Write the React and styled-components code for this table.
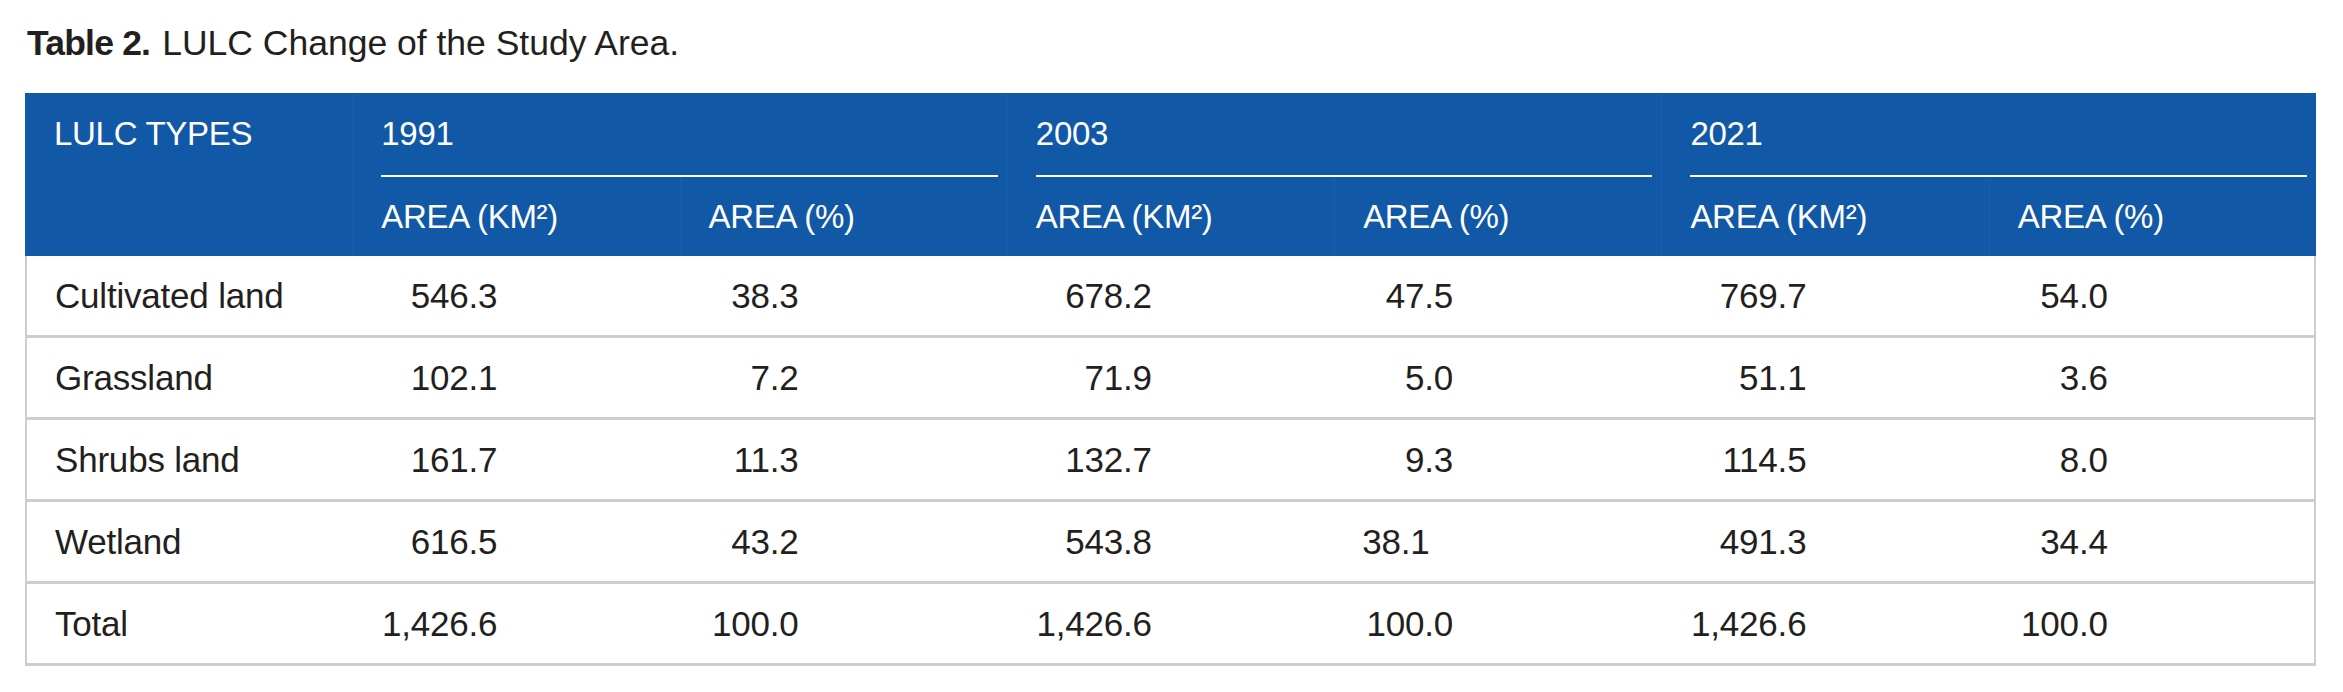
import React from "react"
import styled, { createGlobalStyle } from "styled-components"

const BLUE = "#1158a6"
const RULE = "#cdcdcd"
const INK = "#231f20"

const rows = [
  ["Cultivated land", "546.3", "38.3", "678.2", "47.5", "769.7", "54.0"],
  ["Grassland", "102.1", "7.2", "71.9", "5.0", "51.1", "3.6"],
  ["Shrubs land", "161.7", "11.3", "132.7", "9.3", "114.5", "8.0"],
  ["Wetland", "616.5", "43.2", "543.8", { v: "38.1", left: true }, "491.3", "34.4"],
  ["Total", "1,426.6", "100.0", "1,426.6", "100.0", "1,426.6", "100.0"],
]

const years = ["1991", "2003", "2021"]

const GlobalStyle = createGlobalStyle`
  body {
    margin: 0;
    background: #fff;
    color: ${INK};
    font-family: "Liberation Sans", Arial, sans-serif;
  }
`

const Page = styled.div`
  padding: 23px 25px 30px 25px;
`

const Caption = styled.div`
  font-size: 35.5px;
  line-height: 40px;
  padding-left: 2px;
  color: ${INK};
`

const CaptionLabel = styled.span`
  font-weight: 700;
  letter-spacing: -0.8px;
  margin-right: 12px;
`

const Table = styled.table`
  margin-top: 30px;
  width: 2291px;
  table-layout: fixed;
  border-collapse: separate;
  border-spacing: 0;
`

const Col = styled.col`
  width: 327px;
`

const HeadCell = styled.th`
  background: ${BLUE};
  color: #fff;
  font-weight: 400;
  font-size: 33px;
  letter-spacing: -0.3px;
  text-align: left;
  box-sizing: border-box;
  padding: ${(p) => p.$pad || "0 0 0 28px"};
  height: ${(p) => p.$h}px;
  line-height: ${(p) => p.$lh || p.$h}px;
  vertical-align: ${(p) => p.$valign || "middle"};
  border-left: 1px solid ${(p) => (p.$first ? BLUE : "rgba(255,255,255,0.035)")};
  white-space: nowrap;
`

const YearLabel = styled.div`
  height: 82px;
  line-height: 82px;
  border-bottom: 2px solid #fff;
`

const Cell = styled.td`
  box-sizing: border-box;
  height: 82px;
  padding: 0 0 0 28px;
  font-size: 35px;
  line-height: 40px;
  letter-spacing: -0.2px;
  vertical-align: middle;
  white-space: nowrap;
  border-bottom: 3px solid ${RULE};
  border-left: ${(p) => (p.$first ? `2px solid ${RULE}` : "none")};
  border-right: ${(p) => (p.$last ? `2px solid ${RULE}` : "none")};
`

const Num = styled.span`
  display: inline-block;
  width: ${(p) => p.$w}px;
  text-align: ${(p) => (p.$left ? "left" : "right")};
`

export default function App() {
  return (
    <Page>
      <GlobalStyle />
      <Caption>
        <CaptionLabel>Table 2.</CaptionLabel>LULC Change of the Study Area.
      </Caption>
      <Table>
        <colgroup>
          {Array.from({ length: 7 }).map((_, i) => (
            <Col key={i} />
          ))}
        </colgroup>
        <thead>
          <tr>
            <HeadCell rowSpan={2} $first $h={163} $lh={82} $valign="top">
              LULC TYPES
            </HeadCell>
            {years.map((y) => (
              <HeadCell key={y} colSpan={2} $h={84} $pad="0 9px 0 28px" $valign="top">
                <YearLabel>{y}</YearLabel>
              </HeadCell>
            ))}
          </tr>
          <tr>
            {years.map((y) => (
              <React.Fragment key={y}>
                <HeadCell $h={79}>AREA (KM²)</HeadCell>
                <HeadCell $h={79}>AREA (%)</HeadCell>
              </React.Fragment>
            ))}
          </tr>
        </thead>
        <tbody>
          {rows.map((row) => (
            <tr key={row[0]}>
              {row.map((c, i) => {
                if (i === 0) {
                  return (
                    <Cell key={i} $first>
                      {c}
                    </Cell>
                  )
                }
                const val = typeof c === "string" ? c : c.v
                return (
                  <Cell key={i} $last={i === 6}>
                    <Num $w={i % 2 ? 117 : 91} $left={c.left}>
                      {val}
                    </Num>
                  </Cell>
                )
              })}
            </tr>
          ))}
        </tbody>
      </Table>
    </Page>
  )
}
